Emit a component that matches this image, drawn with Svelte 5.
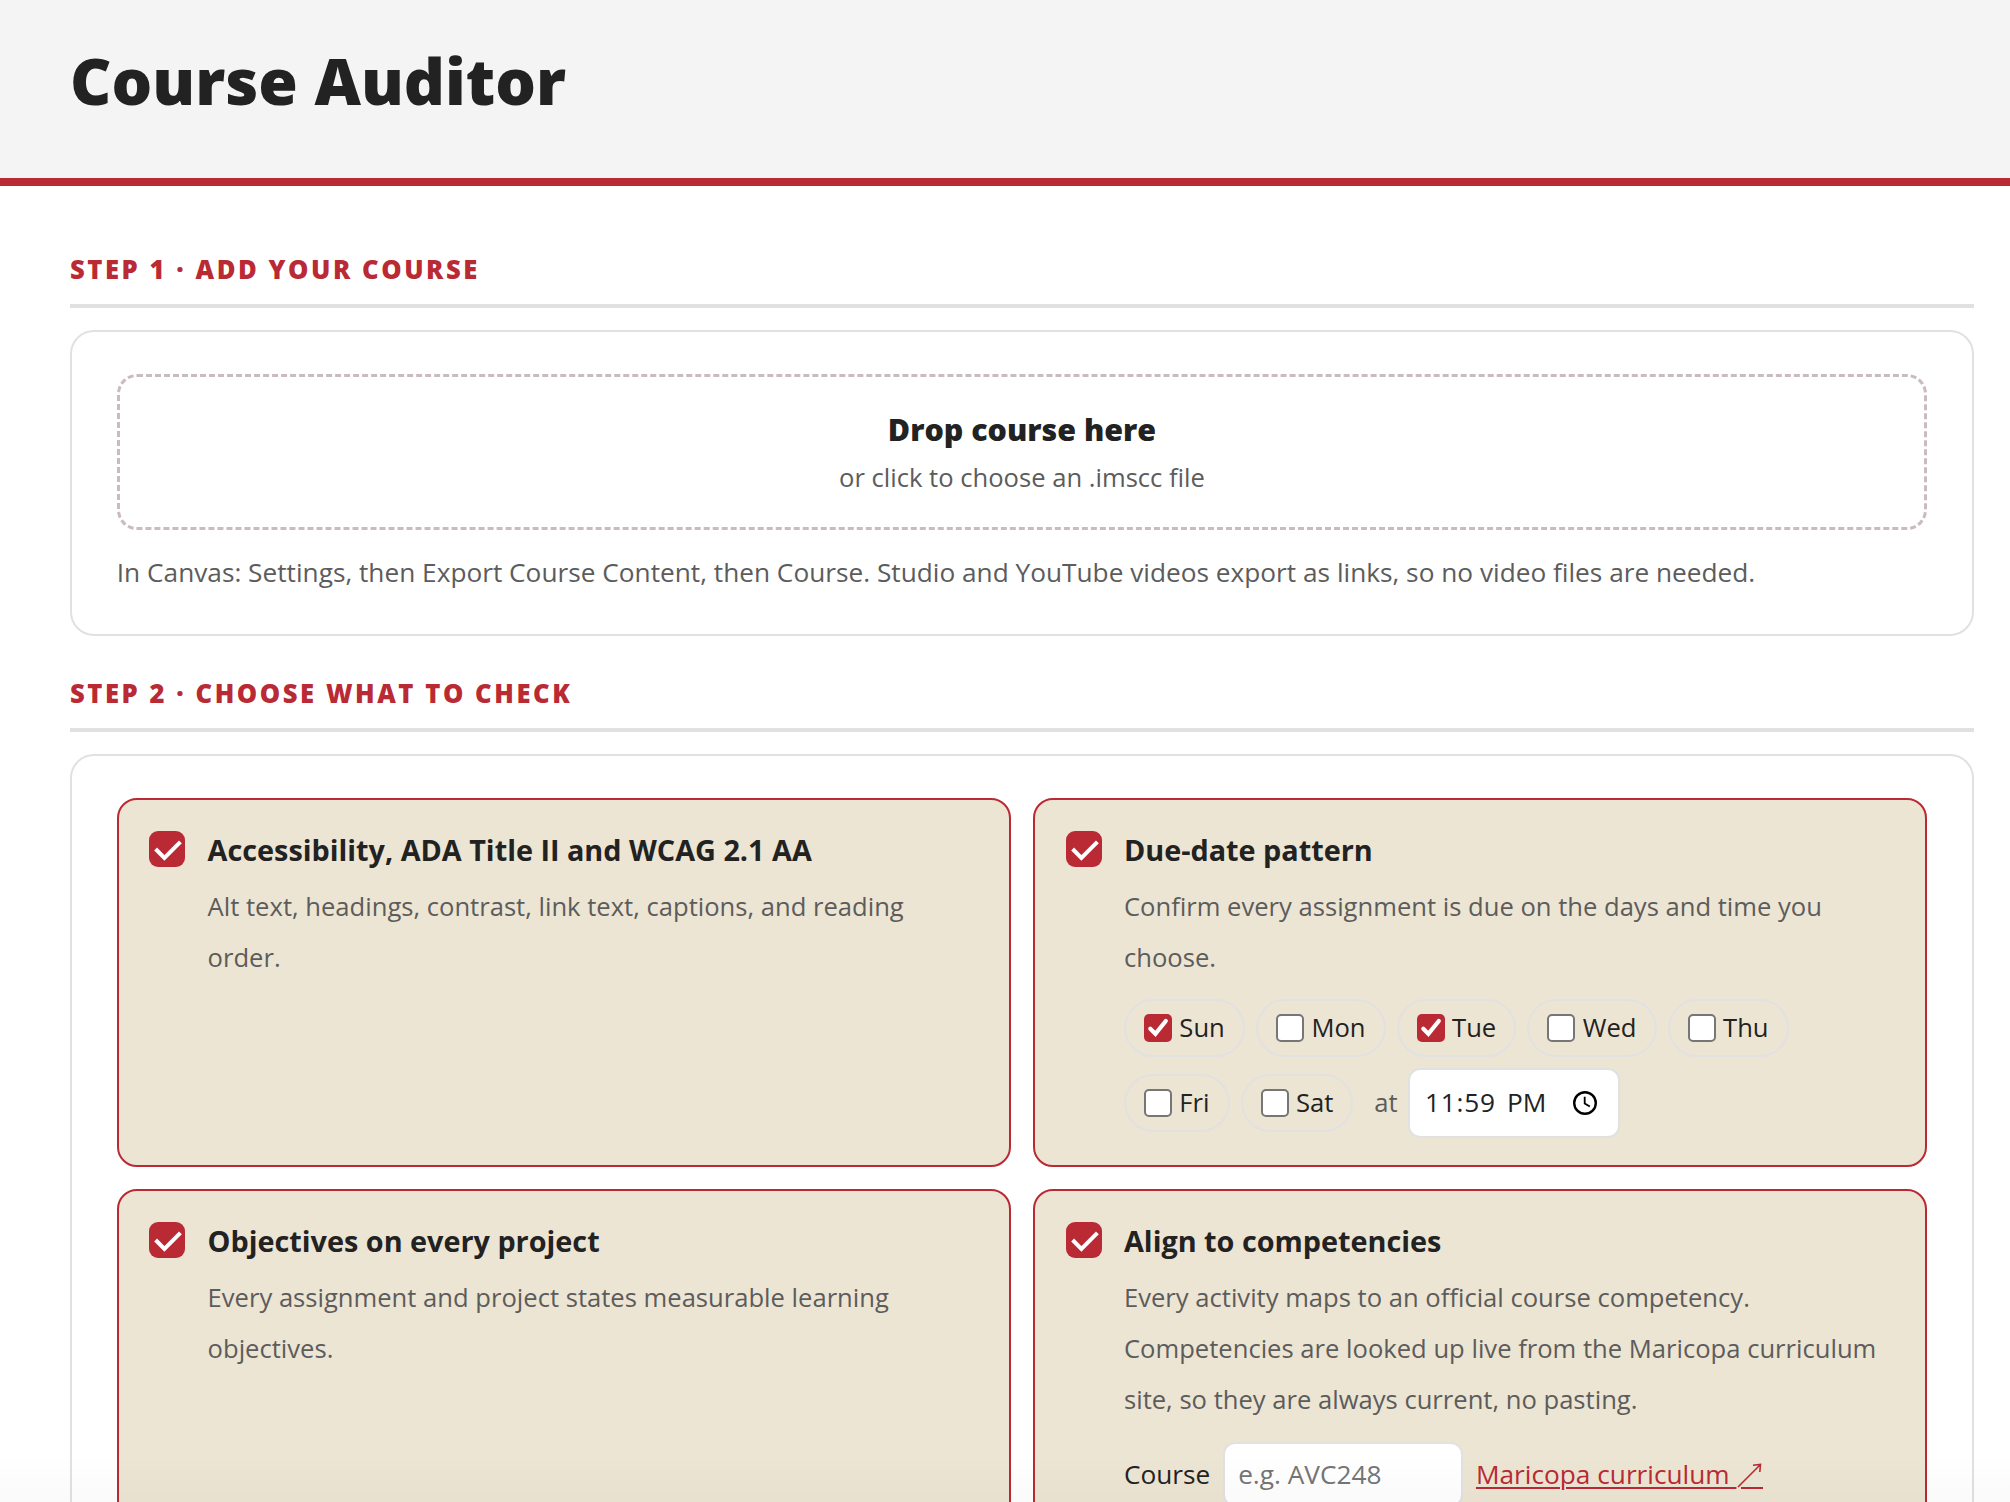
<script lang="ts">
  let days = [
    { name: 'Sun', on: true },
    { name: 'Mon', on: false },
    { name: 'Tue', on: true },
    { name: 'Wed', on: false },
    { name: 'Thu', on: false },
    { name: 'Fri', on: false },
    { name: 'Sat', on: false },
  ];

  let checks = [
    {
      id: 'access',
      title: 'Accessibility, ADA Title II and WCAG 2.1 AA',
      text: 'Alt text, headings, contrast, link text, captions, and reading order.',
      on: true,
    },
    {
      id: 'due',
      title: 'Due-date pattern',
      text: 'Confirm every assignment is due on the days and time you choose.',
      on: true,
    },
    {
      id: 'objectives',
      title: 'Objectives on every project',
      text: 'Every assignment and project states measurable learning objectives.',
      on: true,
    },
    {
      id: 'align',
      title: 'Align to competencies',
      text: 'Every activity maps to an official course competency. Competencies are looked up live from the Maricopa curriculum site, so they are always current, no pasting.',
      on: true,
    },
  ];

  let course = '';

  function toggleCheck(i: number) {
    checks[i].on = !checks[i].on;
  }

  function toggleDay(i: number) {
    days[i].on = !days[i].on;
  }
</script>

<div class="page">
  <header>
    <h1>Course Auditor</h1>
  </header>

  <main>
    <h2>Step 1 · Add your course</h2>
    <section class="card">
      <button class="drop">
        <strong>Drop course here</strong>
        <span>or click to choose an .imscc file</span>
      </button>
      <p class="hint">In Canvas: Settings, then Export Course Content, then Course. Studio and YouTube videos export as links, so no video files are needed.</p>
    </section>

    <h2>Step 2 · Choose what to check</h2>
    <section class="card">
      <div class="options">
        {#each checks as check, i}
          <div class="option" class:active={check.on}>
            <button class="box" role="checkbox" aria-checked={check.on} aria-label={check.title} on:click={() => toggleCheck(i)}>
              {#if check.on}
                <svg width="36" height="36" viewBox="0 0 36 36" fill="none"><path d="M6.6 18L15.4 26.9L31.4 10.9" stroke="#fff" stroke-width="4"/></svg>
              {/if}
            </button>
            <div class="body">
              <h3>{check.title}</h3>
              <p>{check.text}</p>

              {#if check.id === 'due'}
                <div class="days">
                  {#each days as day, d}
                    <button class="day" role="checkbox" aria-checked={day.on} on:click={() => toggleDay(d)}>
                      <span class="tick" class:on={day.on}>
                        {#if day.on}
                          <svg width="28" height="28" viewBox="0 0 28 28" fill="none"><path d="M6.3 14.8L11.4 19.8L21.8 7" stroke="#fff" stroke-width="4.2" stroke-linecap="round"/></svg>
                        {/if}
                      </span>
                      <span class="name">{day.name}</span>
                    </button>
                  {/each}
                  <div class="at">
                    <span class="name">at</span>
                    <div class="time">
                      <span class="clock-text">11:59</span>
                      <span class="meridiem">PM</span>
                      <svg width="26" height="26" viewBox="0 0 26 26" fill="none" stroke="#000"><circle cx="13" cy="13" r="10.8" stroke-width="2.4"/><path d="M12.7 6.8V13.4L17.8 16.6" stroke-width="1.8"/></svg>
                    </div>
                  </div>
                </div>
              {/if}

              {#if check.id === 'align'}
                <div class="lookup">
                  <label for="course">Course</label>
                  <input id="course" type="text" placeholder="e.g. AVC248" bind:value={course} />
                  <a href="#curriculum">Maricopa curriculum&nbsp;<svg width="27" height="28" viewBox="0 0 27 28" fill="none" stroke="currentColor"><path d="M2 24L24.5 1.5M17 2.3L24.5 1.5L23.8 9" stroke-width="1.6"/><path d="M5 25H27" stroke-width="2"/></svg></a>
                </div>
              {/if}
            </div>
          </div>
        {/each}
      </div>
    </section>
  </main>

  <div class="fade"></div>
</div>

<style>
  :global(body) {
    margin: 0;
    background: #fff;
  }

  .page {
    height: 1502px;
    overflow: hidden;
    position: relative;
    box-sizing: border-box;
    font-family: 'Open Sans', 'Noto Sans', sans-serif;
    font-size: 25.6px;
    color: #222;
  }

  button,
  input {
    font: inherit;
    color: inherit;
    box-sizing: border-box;
  }

  header {
    height: 178px;
    padding-left: 70px;
    background: #f4f4f4;
    border-bottom: 8px solid #b92a34;
  }

  h1 {
    margin: 0;
    padding-top: 43px;
    font-size: 64px;
    line-height: 76px;
    font-weight: 800;
  }

  main {
    padding: 64px 36px 0 70px;
  }

  h2 {
    margin: 0 0 22px;
    padding: 1px 0 15px;
    border-bottom: 4px solid #e1e1e1;
    font-size: 25.6px;
    line-height: 38px;
    font-weight: 800;
    letter-spacing: 2.56px;
    text-transform: uppercase;
    color: #b92a34;
  }

  .card {
    padding: 42px 44.8px;
    border: 2px solid #e1e1e1;
    border-radius: 24px;
    background: #fff;
  }

  .card + h2 {
    margin-top: 38px;
  }

  /* Drop zone */
  .drop {
    display: flex;
    flex-direction: column;
    align-items: center;
    width: 100%;
    height: 156px;
    padding: 30px 0 0;
    border: 3px dashed #cabcbe;
    border-radius: 20px;
    background: #fff;
    cursor: pointer;
  }

  .drop strong {
    font-size: 30.4px;
    line-height: 46px;
    font-weight: 800;
  }

  .drop span {
    line-height: 50px;
    color: #5c5c5c;
  }

  .hint {
    margin: 22px 0 0;
    font-size: 26.24px;
    line-height: 40px;
    color: #5c5c5c;
  }

  /* Options */
  .options {
    display: grid;
    grid-template-columns: 1fr 1fr;
    gap: 22px 22.4px;
  }

  .option {
    display: flex;
    gap: 22.4px;
    padding: 31px 30.4px 27px;
    border: 2px solid #e1e1e1;
    border-radius: 20px;
  }

  .option.active {
    border-color: #b92a34;
    background: #ede5d3;
  }

  .box {
    flex: none;
    width: 36px;
    height: 36px;
    padding: 0;
    border: 2px solid #767676;
    border-radius: 9px;
    background: #fff;
    cursor: pointer;
  }

  .active .box {
    border: none;
    background: #b92a34;
  }

  .box svg,
  .tick svg {
    display: block;
  }

  .body {
    flex: 1;
    min-width: 0;
  }

  h3 {
    margin: 0;
    font-size: 28.8px;
    line-height: 38px;
    font-weight: 700;
  }

  .body p {
    margin: 11.75px 0 0;
    line-height: 51.2px;
    color: #5c5c5c;
  }

  .days {
    display: flex;
    flex-wrap: wrap;
    align-items: center;
    gap: 11px 11.2px;
    margin-top: 15.85px;
  }

  .day {
    display: flex;
    align-items: center;
    gap: 7.4px;
    height: 58px;
    padding: 0 18px;
    border: 2px solid #e1e1e1;
    border-radius: 29px;
    background: none;
    cursor: pointer;
  }

  .name {
    padding-bottom: 2px;
  }

  .tick {
    width: 28px;
    height: 28px;
    box-sizing: border-box;
    border: 2px solid #767676;
    border-radius: 5px;
    background: #fff;
  }

  .tick.on {
    border: none;
    background: #b92a34;
  }

  .at {
    display: flex;
    align-items: center;
    gap: 10px;
    margin-left: 9.5px;
    color: #5c5c5c;
  }

  .time {
    display: flex;
    align-items: center;
    box-sizing: border-box;
    width: 212px;
    height: 70px;
    padding: 0 20px 0 15.5px;
    border: 2px solid #e1e1e1;
    border-radius: 12px;
    background: #fff;
    font-size: 26.24px;
    color: #222;
  }

  .clock-text {
    padding-bottom: 2px;
    letter-spacing: 0.8px;
  }

  .meridiem {
    margin: 0 auto 0 11px;
    padding-bottom: 2px;
  }

  .lookup {
    display: flex;
    align-items: center;
    gap: 12.8px;
    margin-top: 17px;
    font-size: 26.24px;
  }

  .lookup label,
  .lookup a {
    padding-bottom: 2px;
  }

  .lookup input {
    width: 240px;
    height: 65px;
    padding: 0 13px 2px;
    border: 2px solid #e1e1e1;
    border-radius: 12px;
    background: #fff;
  }

  .lookup input::placeholder {
    color: #757575;
  }

  .lookup a {
    color: #b92a34;
    white-space: nowrap;
    text-decoration-thickness: 2px;
    text-underline-offset: 3px;
  }

  .lookup svg {
    vertical-align: -7px;
  }

  /* Soft shade along the lower edge */
  .fade {
    position: absolute;
    left: 0;
    right: 0;
    bottom: 0;
    height: 50px;
    background: linear-gradient(to bottom, rgba(0, 0, 0, 0), rgba(0, 0, 0, 0.018));
    pointer-events: none;
  }
</style>
